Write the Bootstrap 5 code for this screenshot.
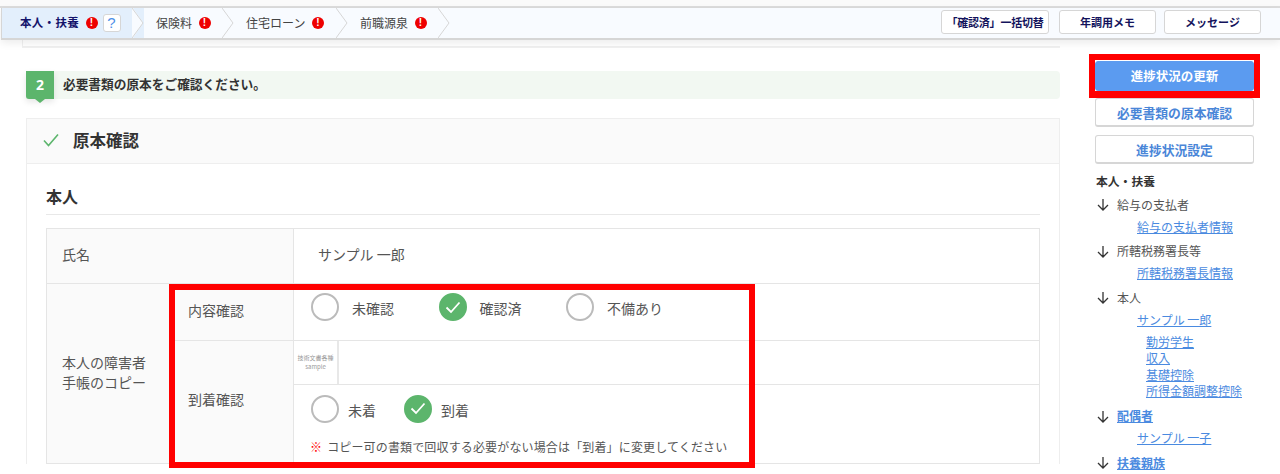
<!DOCTYPE html>
<html lang="ja">
<head>
<meta charset="utf-8">
<title>原本確認</title>
<link href="https://cdn.jsdelivr.net/npm/bootstrap@5.3.0/dist/css/bootstrap.min.css" rel="stylesheet">
<style>
html,body{height:474px;overflow:hidden;background:#fff}
body{font-family:"Noto Sans CJK JP","Noto Sans",sans-serif;color:#444;font-size:13px;width:1280px}
.top-strip{height:8px;background:#fafafa;border-bottom:2px solid #dcdcdc}
.step-bar{height:32px;margin-left:1px;background:#f8fbff;border:1px solid #d6d6d6;border-width:0 0 2px 1px;box-shadow:0 3px 8px rgba(0,0,0,.08);position:relative;z-index:2}
.step{height:30px;flex:none;position:relative;font-size:12px;color:#444}
.step svg.chev{position:absolute;right:0;top:0}
.step-first{width:142px;padding-left:18px;color:#13136b;font-weight:700;font-size:11.5px;letter-spacing:.3px;background:#e3effc}
.step-2{width:90px;padding-left:12px}
.step-3{width:114px;padding-left:12px}
.step-4{width:102px;padding-left:12px}
.alert-dot{width:12px;height:12px;border-radius:50%;background:#ee0000;color:#fff;font:700 10px/12px "Liberation Sans",sans-serif;text-align:center;margin-left:6.5px;flex:none}
.help-box{width:18px;height:18px;margin-left:5px;border:1px solid #d6d6d6;border-radius:3px;background:#fff;color:#4d8fe8;font:400 15px/16px "Liberation Sans",sans-serif;text-align:center}
.top-btn{height:24px;padding:0;background:#fff;border:1px solid #d6d6d6;border-radius:3px;font-size:11px;font-weight:700;color:#13135c;line-height:21px;text-align:center;margin-bottom:2px}
.top-btn:hover{background:#fff;color:#13135c}
.wide-a{width:108px;letter-spacing:-.2px}
.wide-b{width:97px;margin-left:10px}
.wide-c{width:97px;margin-left:8px;margin-right:19px}
.page-row{position:relative}
.main-col{width:1034px;margin-left:26px;flex:none}
.prev-end{height:8px;margin-left:-4px;border-bottom:2px solid #f0f0f0;border-left:1px solid #f0f0f0}
.step-title{margin-top:23px;height:28px;background:#f2f8f2;border-radius:0 4px 4px 0;font-size:12.7px;font-weight:700;color:#333}
.step-ttl-t{padding-bottom:2px}
.step-num{width:28px;height:28px;background:#5cb56c;color:#fff;font:700 14px/28px "Noto Sans",sans-serif;text-align:center;border-radius:0 0 0 3px;position:relative;margin-right:9px;flex:none;box-shadow:0 3px 6px rgba(0,0,0,.1)}
.step-num::after{content:"";position:absolute;left:9px;top:28px;border:5px solid transparent;border-top:4px solid #5cb56c;border-bottom:0}
.check-card{margin-top:19px;border:1px solid #eee;border-bottom:0;border-radius:0}
.check-head{height:45px;background:#fafafa;border-bottom:1px solid #eee;padding-left:16px;padding-bottom:2px;font-size:16.5px;font-weight:700;color:#333}
.check-head svg{margin-right:14px}
.check-body{padding:0 19px}
.person-h{height:51px;border-bottom:1px solid #e8e8e8;font-size:16px;font-weight:700;color:#333;line-height:64px;margin-bottom:13px}
.doc-table{width:994px;table-layout:fixed;border-collapse:collapse;margin:0;font-size:14px;color:#555}
.doc-table th,.doc-table td{border:1px solid #e5e5e5;padding:0;font-weight:400;vertical-align:middle}
.doc-table th{background:#fafafa;padding-left:15px;color:#555}
.doc-table th.multi{line-height:20px;padding-bottom:4px}
.doc-table th.inner{padding-left:14px;padding-bottom:4px}
.doc-table th.inner.low{padding-bottom:6px}
.doc-table th.plain{padding-bottom:3px}
.h-name{height:55px}
.h-content{height:56px}
.h-img{height:44px}
.h-arrive{height:79px}
.doc-table td.name-val{padding-left:24px;padding-bottom:3px}
.radio-line{padding-left:17px;height:56px;padding-bottom:10px}
.radio-line.tight{height:auto;padding:2px 0 0 17px}
.rb{width:28px;height:28px;border-radius:50%;border:2px solid #bbb;background:#fff;flex:none;margin-right:13px}
.rb.on{background:#5cb56c;border-color:#5cb56c}
.tight .rb{margin-right:9px}
.opt{margin-right:44.5px}
.opt-t{padding-top:3px}
.tight .opt{margin-right:28px}
.thumb{width:45px;height:43px;border-right:2px solid #e8e8e8;color:#999;font:6px/9px "Noto Sans CJK JP",sans-serif;text-align:center;padding-top:12px}
.note{font-size:12px;color:#555;padding:15px 0 0 16px;letter-spacing:.15px;line-height:18px}
.note b{color:#f00;font-weight:900;margin-right:5px}
.side-col{width:159px;margin-left:35px;flex:none;padding-top:21px}
.side-btn{display:block;width:159px;padding:0;border-radius:3px;font-weight:700;text-align:center}
.side-main{height:30px;line-height:28px;background:#5b9bf0;border:1px solid #5b9bf0;color:#fff;margin-bottom:7px;font-size:12.5px}
.side-main:hover{background:#5b9bf0;color:#fff;border-color:#5b9bf0}
.side-sub{height:29px;line-height:25px;background:#fff;border:1px solid #d6d6d6;color:#4a86d8;border-bottom-width:2px;margin-bottom:8px;font-size:12.8px}
.side-sub:hover{background:#fff;color:#4a86d8;border-color:#d6d6d6}
.side-nav{font-size:12px;color:#555;padding-top:1px;line-height:16px}
.side-nav a{color:#4a8ae0;text-decoration:underline}
.nav-h{font-weight:700;color:#333;font-size:11.8px;height:15px;margin-left:1px}
.nav-g{height:16px;margin-top:8.5px}
.nav-g svg{margin:0 8px 0 2px;flex:none}
.nav-l{padding-left:42px;margin-top:6px;height:16px}
.nav-s{padding-left:51px;height:16.6px}
.nav-s.first{margin-top:6px}
.nav-b{font-weight:700}
.mark-box{position:absolute;border:6px solid #f00;pointer-events:none;z-index:3}
.mark-table{left:169px;top:244px;width:586px;height:184px}
.mark-side{left:1089px;top:14px;width:171px;height:44px;border-width:6px 6px 7px}
</style>
</head>
<body>
<div class="top-strip"></div>
<div class="step-bar d-flex align-items-center">
  <div class="step step-first d-flex align-items-center">本人・扶養<span class="alert-dot">!</span><span class="help-box">?</span>
    <svg class="chev" width="12" height="30" viewBox="0 0 12 30"><path d="M0 0H1L11 15 1 30H0Z" fill="#f8fbff"/><path d="M0 0 11 15 0 30" fill="none" stroke="#d6d6d6"/></svg></div>
  <div class="step step-2 d-flex align-items-center">保険料<span class="alert-dot">!</span>
    <svg class="chev" width="12" height="30" viewBox="0 0 12 30"><path d="M0 0 11 15 0 30" fill="none" stroke="#d6d6d6"/></svg></div>
  <div class="step step-3 d-flex align-items-center">住宅ローン<span class="alert-dot">!</span>
    <svg class="chev" width="12" height="30" viewBox="0 0 12 30"><path d="M0 0 11 15 0 30" fill="none" stroke="#d6d6d6"/></svg></div>
  <div class="step step-4 d-flex align-items-center">前職源泉<span class="alert-dot">!</span>
    <svg class="chev" width="12" height="30" viewBox="0 0 12 30"><path d="M0 0 11 15 0 30" fill="none" stroke="#d6d6d6"/></svg></div>
  <div class="ms-auto d-flex align-items-center">
    <button class="btn top-btn wide-a">「確認済」一括切替</button>
    <button class="btn top-btn wide-b">年調用メモ</button>
    <button class="btn top-btn wide-c">メッセージ</button>
  </div>
</div>
<div class="page-row d-flex align-items-start">
  <div class="main-col">
    <div class="prev-end"></div>
    <div class="step-title d-flex align-items-center"><span class="step-num">2</span><span class="step-ttl-t">必要書類の原本をご確認ください。</span></div>
    <div class="card check-card">
      <div class="check-head d-flex align-items-center">
        <svg width="16" height="14" viewBox="0 0 16 14"><path d="M1 7.5 5.5 12.5 15 1.5" fill="none" stroke="#5cb56c" stroke-width="1.6"/></svg>原本確認</div>
      <div class="check-body">
        <div class="person-h">本人</div>
        <table class="doc-table">
          <colgroup><col style="width:127px"><col style="width:120px"><col></colgroup>
          <tr class="h-name"><th colspan="2" class="plain">氏名</th><td class="name-val">サンプル 一郎</td></tr>
          <tr class="h-content"><th rowspan="3" class="multi">本人の障害者<br>手帳のコピー</th><th class="inner">内容確認</th>
            <td><div class="radio-line d-flex align-items-center">
              <div class="opt d-flex align-items-center"><span class="rb"></span><span class="opt-t">未確認</span></div>
              <div class="opt d-flex align-items-center"><span class="rb on d-flex align-items-center justify-content-center"><svg width="16" height="13" viewBox="0 0 16 13"><path d="M1.5 6.5 6 11 14.5 1.5" fill="none" stroke="#fff" stroke-width="1.8"/></svg></span><span class="opt-t">確認済</span></div>
              <div class="opt d-flex align-items-center"><span class="rb"></span><span class="opt-t">不備あり</span></div>
            </div></td></tr>
          <tr class="h-img"><th rowspan="2" class="inner low">到着確認</th><td><div class="thumb">技術文書各種<br>sample</div></td></tr>
          <tr class="h-arrive"><td>
            <div class="radio-line tight d-flex align-items-center">
              <div class="opt d-flex align-items-center"><span class="rb"></span><span class="opt-t">未着</span></div>
              <div class="opt d-flex align-items-center"><span class="rb on d-flex align-items-center justify-content-center"><svg width="16" height="13" viewBox="0 0 16 13"><path d="M1.5 6.5 6 11 14.5 1.5" fill="none" stroke="#fff" stroke-width="1.8"/></svg></span><span class="opt-t">到着</span></div>
            </div>
            <div class="note"><b>※</b>コピー可の書類で回収する必要がない場合は「到着」に変更してください</div>
          </td></tr>
        </table>
      </div>
    </div>
  </div>
  <div class="side-col">
    <button class="btn side-btn side-main">進捗状況の更新</button>
    <button class="btn side-btn side-sub">必要書類の原本確認</button>
    <button class="btn side-btn side-sub">進捗状況設定</button>
    <div class="side-nav">
      <div class="nav-h">本人・扶養</div>
      <div class="nav-g d-flex align-items-center"><svg width="12" height="13" viewBox="0 0 12 13"><path d="M6 1V12M1 7 6 12 11 7" fill="none" stroke="#333" stroke-width="1.3"/></svg>給与の支払者</div>
      <div class="nav-l"><a href="#">給与の支払者情報</a></div>
      <div class="nav-g d-flex align-items-center"><svg width="12" height="13" viewBox="0 0 12 13"><path d="M6 1V12M1 7 6 12 11 7" fill="none" stroke="#333" stroke-width="1.3"/></svg>所轄税務署長等</div>
      <div class="nav-l"><a href="#">所轄税務署長情報</a></div>
      <div class="nav-g d-flex align-items-center"><svg width="12" height="13" viewBox="0 0 12 13"><path d="M6 1V12M1 7 6 12 11 7" fill="none" stroke="#333" stroke-width="1.3"/></svg>本人</div>
      <div class="nav-l"><a href="#">サンプル 一郎</a></div>
      <div class="nav-s first"><a href="#">勤労学生</a></div>
      <div class="nav-s"><a href="#">収入</a></div>
      <div class="nav-s"><a href="#">基礎控除</a></div>
      <div class="nav-s"><a href="#">所得金額調整控除</a></div>
      <div class="nav-g d-flex align-items-center"><svg width="12" height="13" viewBox="0 0 12 13"><path d="M6 1V12M1 7 6 12 11 7" fill="none" stroke="#333" stroke-width="1.3"/></svg><a href="#" class="nav-b">配偶者</a></div>
      <div class="nav-l"><a href="#">サンプル 一子</a></div>
      <div class="nav-g d-flex align-items-center"><svg width="12" height="13" viewBox="0 0 12 13"><path d="M6 1V12M1 7 6 12 11 7" fill="none" stroke="#333" stroke-width="1.3"/></svg><a href="#" class="nav-b">扶養親族</a></div>
    </div>
  </div>
  <div class="mark-box mark-table"></div>
  <div class="mark-box mark-side"></div>
</div>
<script src="https://cdn.jsdelivr.net/npm/bootstrap@5.3.0/dist/js/bootstrap.bundle.min.js"></script>
</body>
</html>
